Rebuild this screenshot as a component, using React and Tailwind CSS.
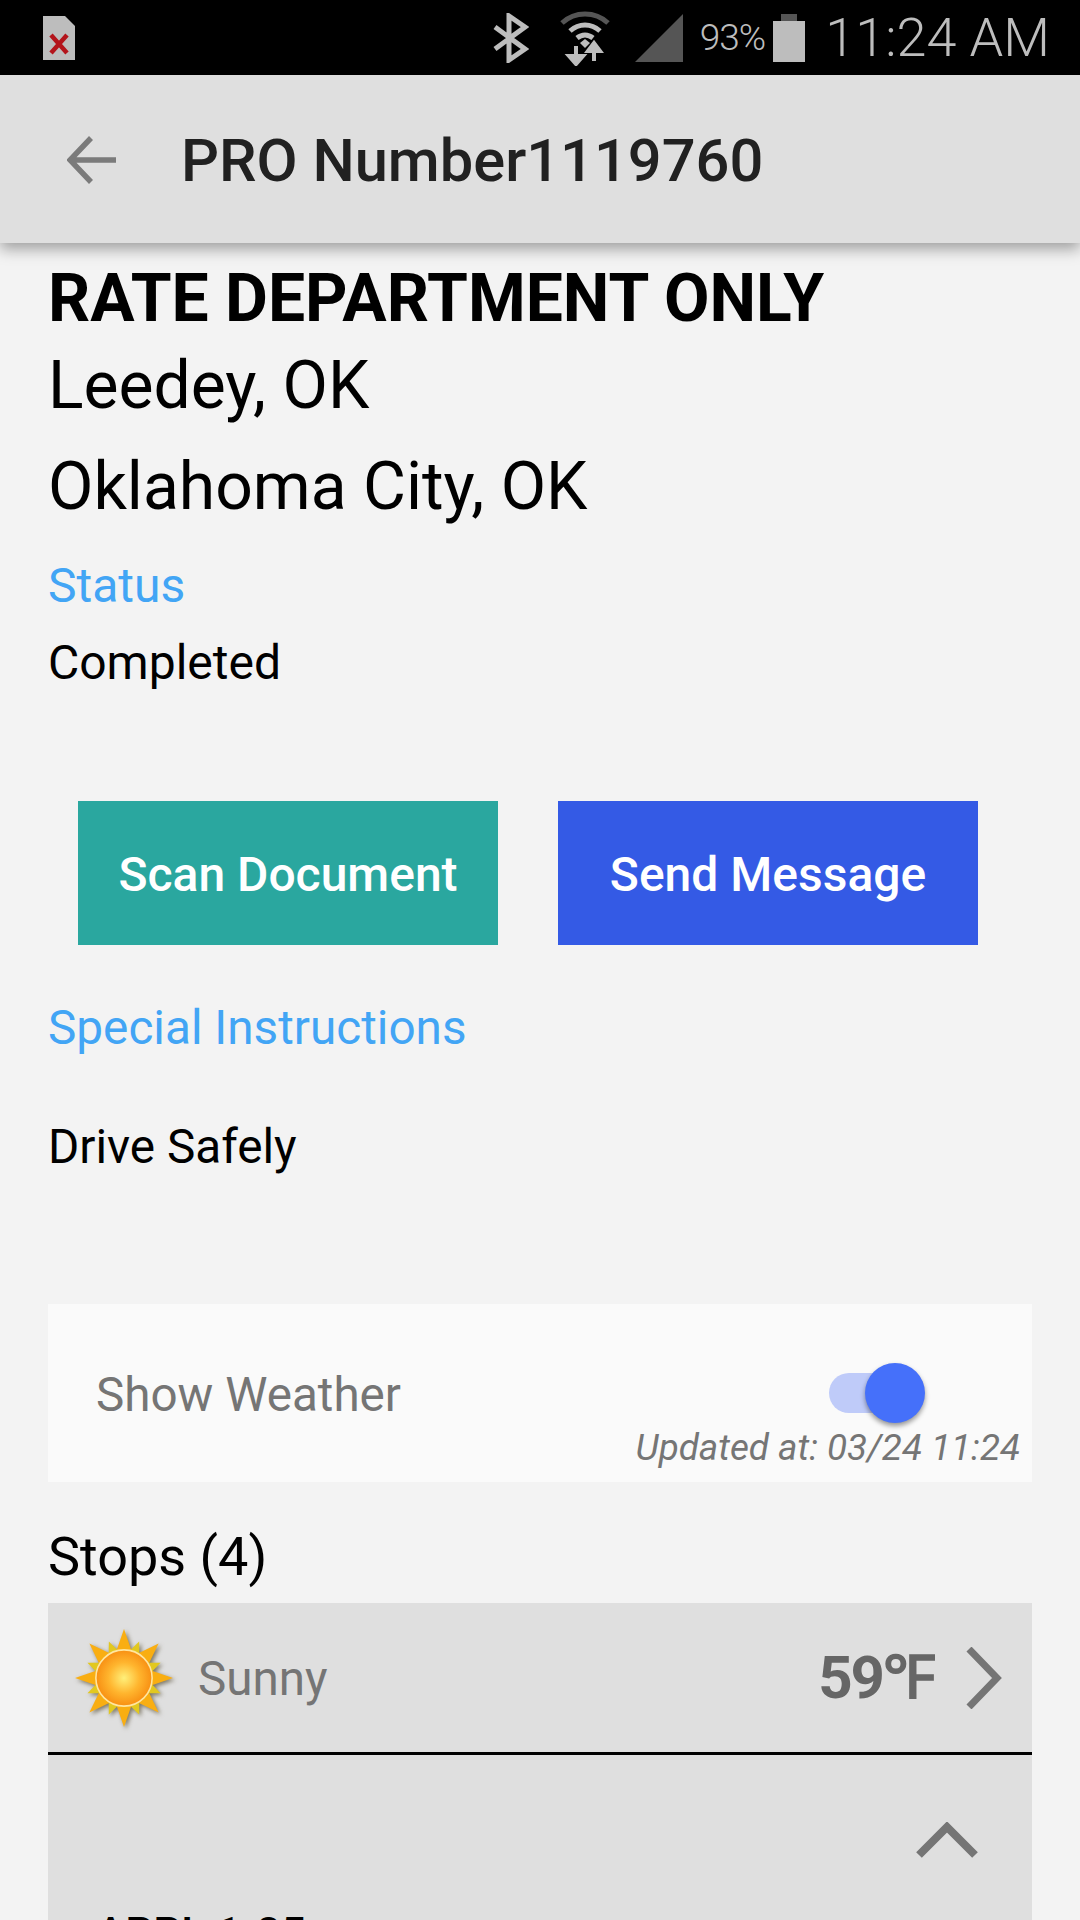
const font = "font-['Roboto',sans-serif]";

function SimFileIcon() {
  return (
    <svg width="34" height="46" viewBox="0 0 34 46">
      <path d="M1 1H23L33 11V45H1Z" fill="#bdbdbd" />
      <path d="M9 20L25 38M25 20L9 38" stroke="#b3141b" strokeWidth="4.5" fill="none" />
    </svg>
  );
}

function StatusIcons() {
  return (
    <>
      <svg width="36" height="50" viewBox="0 0 36 50" fill="none" stroke="#bdbdbd" strokeWidth="5">
        <path d="M2 14L32 36L16 47V3L32 14L2 36" />
      </svg>
      <svg width="52" height="56" viewBox="0 0 52 56" fill="none" className="ml-[30px]">
        <path d="M3 13C16 1 36 1 49 13" stroke="#555" strokeWidth="5" />
        <path d="M11 21C20 13 32 13 41 21" stroke="#bdbdbd" strokeWidth="5" />
        <path d="M18 28C23 24 29 24 34 28" stroke="#bdbdbd" strokeWidth="5" />
        <path d="M21 33L26 29L31 33L26 38Z" fill="#bdbdbd" />
        <path d="M17 36V49M10 46L17 54L24 46Z" stroke="#bdbdbd" strokeWidth="4" fill="#bdbdbd" />
        <path d="M35 51V39M29 41L35 33L41 41Z" stroke="#bdbdbd" strokeWidth="4" fill="#bdbdbd" />
      </svg>
      <svg width="48" height="48" viewBox="0 0 48 48" className="ml-[24px]">
        <path d="M0 48L48 0V48Z" fill="#555" />
      </svg>
    </>
  );
}

function BackArrow() {
  return (
    <svg width="50" height="48" viewBox="0 0 50 48" fill="none" stroke="#7b7b7b" strokeWidth="5.5" className="mt-[2px]">
      <path d="M49 24H4M24 2L3 24L24 46" />
    </svg>
  );
}

function SunIcon() {
  const rays = Array.from({ length: 16 }, (_, i) => i * 22.5);
  return (
    <svg width="100" height="100" viewBox="0 0 96 96" className="drop-shadow-[2px_2px_2px_rgba(60,50,20,0.6)]">
      <defs>
        <radialGradient id="sunCore">
          <stop offset="0" stopColor="#fff07a" />
          <stop offset="0.55" stopColor="#ffb52e" />
          <stop offset="1" stopColor="#f88f12" />
        </radialGradient>
      </defs>
      {rays.map((deg, i) => (
        <g key={deg} transform={`rotate(${deg} 48 48)`}>
          <path
            d={i % 2 === 0 ? "M40 24L48 1L56 24Z" : "M42 24L48 10L54 24Z"}
            fill={i % 2 === 0 ? "#f9ae12" : "#e2c81f"}
          />
        </g>
      ))}
      <circle cx="48" cy="48" r="27" fill="url(#sunCore)" stroke="#ffe6a0" strokeWidth="1.5" />
    </svg>
  );
}

export default function App() {
  return (
    <div className={`${font} flex h-[1920px] w-[1080px] flex-col overflow-hidden bg-[#f3f3f3]`}>
      {/* status bar */}
      <div className="flex h-[75px] shrink-0 items-center bg-black pl-[42px] pr-[30px]">
        <SimFileIcon />
        <div className="ml-auto flex items-center">
          <StatusIcons />
          <span className="ml-[17px] text-[37px] font-light tracking-[-1px] text-[#bdbdbd]">93%</span>
          <div className="ml-[8px] flex flex-col items-center">
            <div className="h-[7px] w-[16px] bg-[#555]" />
            <div className="h-[41px] w-[32px] bg-[#bdbdbd]" />
          </div>
          <span className="ml-[20px] text-[54px] font-light leading-none text-[#bdbdbd]">11:24 AM</span>
        </div>
      </div>

      {/* app bar */}
      <div className="relative z-10 flex h-[168px] shrink-0 items-center bg-[#dfdfdf] pl-[67px] shadow-[0_6px_14px_rgba(0,0,0,0.35)]">
        <BackArrow />
        <h1 className="ml-[64px] pt-[6px] text-[59.6px] font-medium text-[#212121]">PRO Number1119760</h1>
      </div>

      {/* job details */}
      <div className="flex flex-1 flex-col px-[48px] text-black">
        <h2 className="mt-[18px] text-[66px] font-bold leading-[76px]">RATE DEPARTMENT ONLY</h2>
        <p className="mt-[11px] text-[66px] leading-[76px]">Leedey, OK</p>
        <p className="mt-[25px] text-[66px] leading-[76px]">Oklahoma City, OK</p>
        <p className="mt-[34px] text-[48px] leading-[54px] text-[#42a5f5]">Status</p>
        <p className="mt-[23px] text-[48px] leading-[54px]">Completed</p>

        <div className="mt-[111px] flex gap-[60px] px-[30px]">
          <div className="flex h-[144px] w-[420px] items-center justify-center bg-[#2aa79f] pt-[3px] text-[48px] font-medium text-white">
            Scan Document
          </div>
          <div className="flex h-[144px] w-[420px] items-center justify-center bg-[#345ae5] pt-[3px] text-[48px] font-medium text-white">
            Send Message
          </div>
        </div>

        <p className="mt-[56px] text-[47.7px] leading-[54px] text-[#42a5f5]">Special Instructions</p>
        <p className="mt-[65px] text-[47.7px] leading-[54px]">Drive Safely</p>

        {/* weather toggle */}
        <div className="mt-[130px] flex h-[178px] flex-col bg-[#fafafa] pl-[48px] pr-[12px]">
          <div className="flex items-center justify-between pr-[125px] pt-[64px]">
            <span className="text-[47.6px] leading-[54px] text-[#757575]">Show Weather</span>
            <div className="relative mb-[5px] h-[40px] w-[66px] rounded-full bg-[#bfcbf9]">
              <div className="absolute left-[36px] top-[-10px] h-[60px] w-[60px] rounded-full bg-[#4570fa] shadow-[0_3px_5px_rgba(0,0,0,0.4)]" />
            </div>
          </div>
          <p className="mt-[4px] text-right text-[36.8px] italic leading-[44px] text-[#757575]">Updated at: 03/24 11:24</p>
        </div>

        <p className="mt-[43px] text-[54px] leading-[64px]">Stops (4)</p>

        {/* stops */}
        <div className="mt-[14px] flex flex-1 flex-col bg-[#dfdfdf]">
          <div className="flex h-[152px] items-center border-b-[3px] border-black pl-[26px] pr-[30px]">
            <SunIcon />
            <span className="ml-[24px] pt-[4px] text-[47.6px] text-[#757575]">Sunny</span>
            <span className="ml-auto text-[60px] font-bold tracking-[-2px] text-[#666]">59℉</span>
            <svg width="36" height="62" viewBox="0 0 36 62" fill="none" stroke="#757575" strokeWidth="7" className="ml-[33px]">
              <path d="M3 2L31 31L3 60" />
            </svg>
          </div>
          <div className="flex justify-end pr-[54px] pt-[67px]">
            <svg width="62" height="36" viewBox="0 0 62 36" fill="none" stroke="#757575" strokeWidth="8">
              <path d="M3 33L31 5L59 33" />
            </svg>
          </div>
          <p className="ml-[48px] mt-[43px] text-[44px] font-medium">APPL 1-85</p>
        </div>
      </div>
    </div>
  );
}
